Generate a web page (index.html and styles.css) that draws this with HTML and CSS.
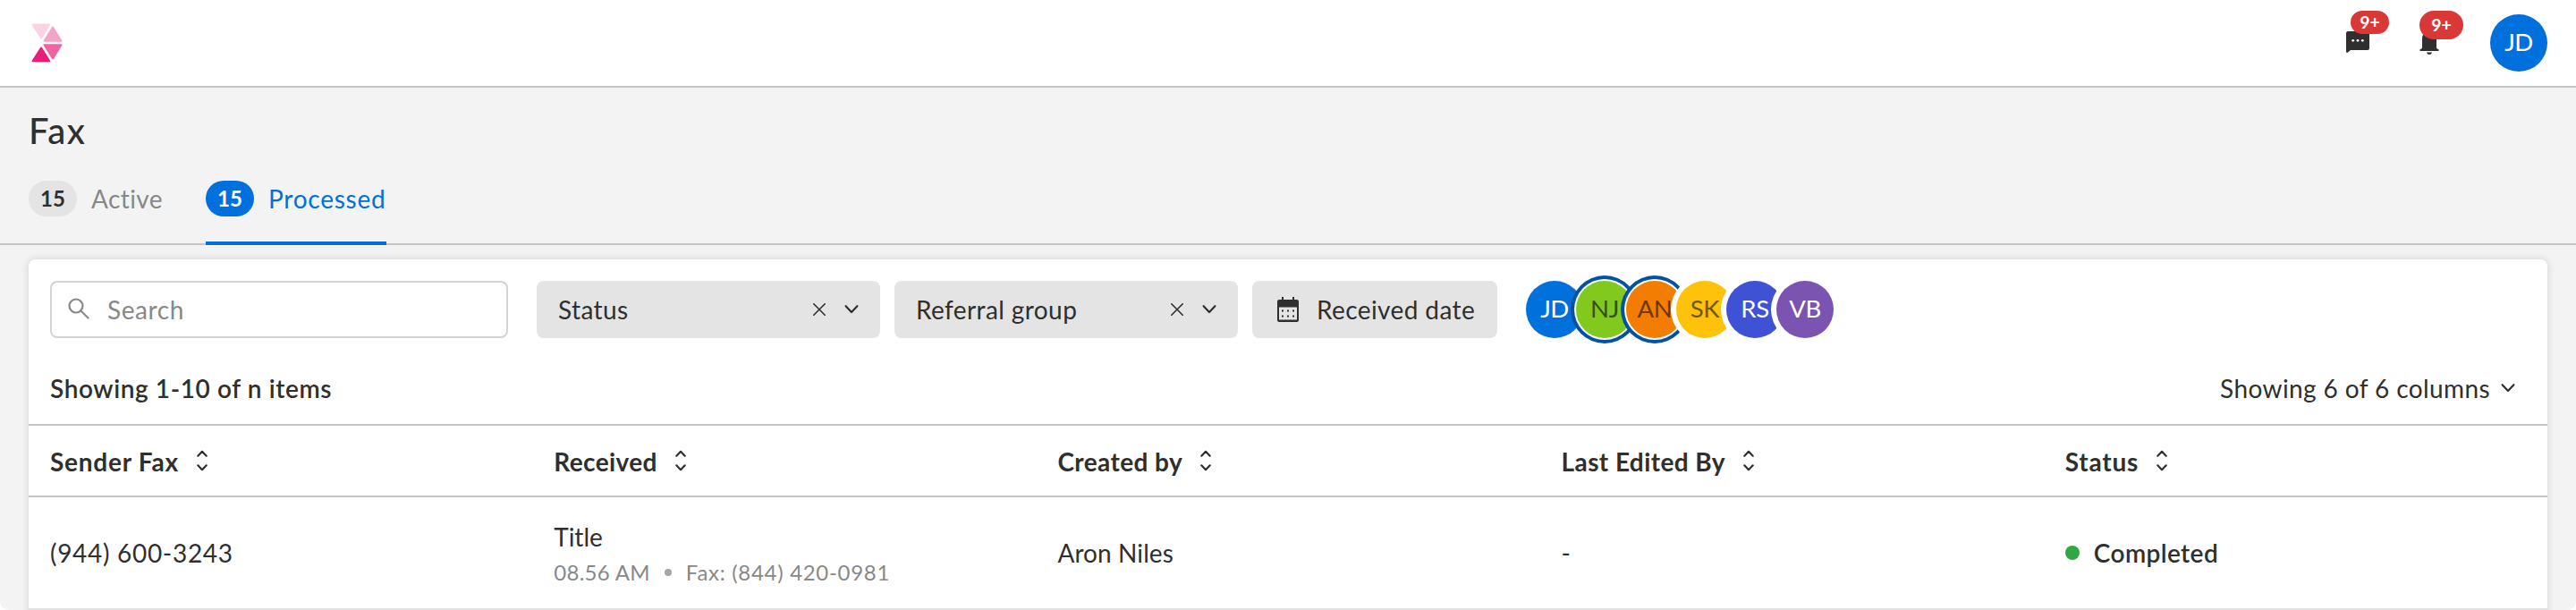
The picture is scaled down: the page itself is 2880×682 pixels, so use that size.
FILE: index.html
```
<!DOCTYPE html>
<html lang="en">
<head>
<meta charset="utf-8">
<title>Fax</title>
<link rel="stylesheet" href="styles.css">
</head>
<body>
<svg class="defs" aria-hidden="true">
  <symbol id="sort" viewBox="0 0 12 24"><path d="M1.3 6.7 6 1.8l4.7 4.9M1.3 17.3 6 22.2l4.7-4.9"/></symbol>
  <symbol id="chevron" viewBox="0 0 16 12"><path d="M1.6 2.2 8 9l6.4-6.800"/></symbol>
  <symbol id="close" viewBox="0 0 14 14"><path d="M.8.8l12.4 12.4M13.2.8.8 13.2"/></symbol>
</svg>
<div class="app">
  <header class="topbar">
    <svg class="logo" viewBox="0 0 36 44">
      <path fill="#fbd2e4" stroke="#fbd2e4" d="M1.500 1.500H20L11 16.500Z"/>
      <path fill="#f7a3c8" stroke="#f7a3c8" d="M24 4.500 33.500 19.800H14.500Z"/>
      <path fill="#f065a1" stroke="#f065a1" d="M14.500 24.200H33.500L24 39.500Z"/>
      <path fill="#e91e79" stroke="#e91e79" d="M11 27.500 20.300 42.300H1.500Z"/>
    </svg>
    <div class="actions">
      <div class="action action-chat">
        <svg viewBox="0 0 26 24"><path fill="#2f2f2f" d="M2 0h22a2 2 0 0 1 2 2v17a2 2 0 0 1-2 2H5l-3.300 2.700Q0 24.500 0 22V2a2 2 0 0 1 2-2Z"/><g fill="#fff"><circle cx="7.700" cy="10.300" r="1.400"/><circle cx="13" cy="10.300" r="1.400"/><circle cx="18.300" cy="10.300" r="1.400"/></g></svg>
        <span class="badge badge-small">9+</span>
      </div>
      <div class="action action-bell">
        <svg viewBox="0 0 22 28"><path fill="#2f2f2f" d="M11 2c5 0 8 3.500 8 8.500V20q0 2 2.500 2.300V24H.5v-1.700Q3 22 3 20v-9.500C3 5.500 6 2 11 2ZM8 25.500h6q-.5 2.500-3 2.500t-3-2.500Z"/></svg>
        <span class="badge badge-large">9+</span>
      </div>
      <div class="avatar blue">JD</div>
    </div>
  </header>

  <div class="page-head">
    <h1 class="title">Fax</h1>
    <nav class="tabs">
      <a class="tab"><span class="count">15</span><span>Active</span></a>
      <a class="tab tab-active"><span class="count">15</span><span class="loose">Processed</span></a>
    </nav>
  </div>

  <main class="card">
    <div class="filters">
      <div class="search">
        <svg viewBox="0 0 24 24"><circle cx="9" cy="9" r="7.500"/><path d="m14.500 14.500 8 8"/></svg>
        <span>Search</span>
      </div>
      <div class="select">
        <span class="select-label">Status</span>
        <svg class="close"><use href="#close"/></svg>
        <svg class="chevron"><use href="#chevron"/></svg>
      </div>
      <div class="select">
        <span class="select-label">Referral group</span>
        <svg class="close"><use href="#close"/></svg>
        <svg class="chevron"><use href="#chevron"/></svg>
      </div>
      <div class="date">
        <svg viewBox="0 0 24 28"><path fill="#2f2f2f" fill-rule="evenodd" d="M5 0h2v3h10V0h2v3h3a2 2 0 0 1 2 2v21a2 2 0 0 1-2 2H2a2 2 0 0 1-2-2V5a2 2 0 0 1 2-2h3ZM2 11.500V25.500h20V11.500Z"/><g fill="#2f2f2f"><path d="M5 14.500h2v2H5zM11 14.500h2v2h-2zM17 14.500h2v2h-2zM5 20.500h2v2H5zM11 20.500h2v2h-2zM17 20.500h2v2h-2z"/></g></svg>
        <span>Received date</span>
      </div>
      <div class="people">
        <div class="avatar blue">JD</div>
        <div class="avatar green selected">NJ</div>
        <div class="avatar orange selected">AN</div>
        <div class="avatar yellow">SK</div>
        <div class="avatar indigo">RS</div>
        <div class="avatar purple">VB</div>
      </div>
    </div>
    <div class="summary">
      <span class="summary-count">Showing 1-10 of n items</span>
      <span class="columns"><span>Showing 6 of 6 columns</span><svg class="chevron"><use href="#chevron"/></svg></span>
    </div>
    <div class="row head">
      <div class="cell"><span class="loose">Sender Fax</span><svg class="sort"><use href="#sort"/></svg></div>
      <div class="cell"><span>Received</span><svg class="sort"><use href="#sort"/></svg></div>
      <div class="cell"><span>Created by</span><svg class="sort"><use href="#sort"/></svg></div>
      <div class="cell"><span>Last Edited By</span><svg class="sort"><use href="#sort"/></svg></div>
      <div class="cell"><span class="loose">Status</span><svg class="sort"><use href="#sort"/></svg></div>
    </div>
    <div class="row">
      <div class="cell wide">(944) 600-3243</div>
      <div class="cell">
        <div>
          <div class="item-title">Title</div>
          <div class="meta"><span class="time">08.56 AM</span><i class="sep"></i><span class="number">Fax: (844) 420-0981</span></div>
        </div>
      </div>
      <div class="cell tight">Aron Niles</div>
      <div class="cell">-</div>
      <div class="cell status"><i class="dot"></i>Completed</div>
    </div>
  </main>
</div>
</body>
</html>
```
FILE: styles.css
```
* { box-sizing: border-box; }
body {
  margin: 0;
  background: #fff;
  color: #2f2f2f;
  font: 28px/40px Lato, "Open Sans", sans-serif;
  letter-spacing: .4px;
}
svg { display: block; flex: none; }
.defs { position: absolute; width: 0; height: 0; }
.app {
  height: 682px;
  overflow: hidden;
  background: #f3f3f3;
  border-radius: 0 0 10px 10px;
}
.wide { letter-spacing: .7px; }
.loose { letter-spacing: .75px; }
.tight { letter-spacing: .1px; }

.topbar {
  display: flex;
  justify-content: space-between;
  align-items: flex-start;
  height: 98px;
  padding: 16px 32px 0 35px;
  background: #fff;
  border-bottom: 2px solid #c4c4c4;
}
.logo { width: 36px; height: 44px; margin-top: 10px; stroke-width: 2; stroke-linejoin: round; }
.actions { display: flex; }
.action { position: relative; }
.action-chat { width: 26px; height: 24px; margin: 19px 56px 0 0; }
.action-bell { width: 22px; height: 28px; margin: 17px 57px 0 0; }
.badge {
  position: absolute;
  border-radius: 16px;
  background: #da3737;
  color: #fff;
  font-weight: 700;
  font-size: 19.500px;
  letter-spacing: 0;
  text-align: center;
}
.badge-small { left: 5px; top: -23px; width: 43px; height: 26px; line-height: 26px; }
.badge-large { left: 0; top: -21px; width: 49px; height: 32px; line-height: 32px; }

.avatar {
  width: 64px;
  height: 64px;
  border-radius: 50%;
  color: #fff;
  font-size: 27.500px;
  line-height: 62px;
  text-align: center;
  letter-spacing: -.4px;
}
.blue { background: #0070dd; }
.green { background: #82c91e; color: #34500c; }
.orange { background: #f27d00; color: #703600; }
.yellow { background: #ffc20a; color: #705600; }
.indigo { background: #3f51d4; }
.purple { background: #7b53b0; }

.page-head {
  height: 176px;
  padding: 24px 32px 0;
  border-bottom: 2px solid #c4c4c4;
}
.title { margin: 0; font-size: 40px; line-height: 48px; font-weight: 500; letter-spacing: 1.500px; }
.tabs { display: flex; gap: 48px; padding-top: 32px; }
.tab {
  display: flex;
  align-items: flex-start;
  gap: 16px;
  width: 150px;
  height: 72px;
  line-height: 40px;
  color: #888;
}
.tab-active { width: 202px; color: #0070dd; border-bottom: 4px solid #0070dd; border-radius: 2px 2px 0 0; }
.count {
  width: 54px;
  height: 40px;
  border-radius: 20px;
  background: #e4e4e4;
  color: #2f2f2f;
  font-size: 24px;
  font-weight: 700;
  line-height: 39px;
  text-align: center;
  letter-spacing: 0;
}
.tab-active .count { background: #0070dd; color: #fff; }

.card {
  height: 420px;
  margin: 16px 32px 0;
  border-radius: 8px 8px 0 0;
  background: #fff;
  box-shadow: 0 0 10px rgba(0, 0, 0, .14);
}
.filters { display: flex; align-items: center; height: 112px; padding: 0 24px; }
.search {
  display: flex;
  align-items: center;
  width: 512px;
  height: 64px;
  margin-right: 32px;
  padding-left: 18px;
  gap: 20px;
  border: 2px solid #d3d3d3;
  border-radius: 8px;
  color: #888;
  letter-spacing: .6px;
}
.search svg { width: 24px; height: 24px; margin-top: -2px; fill: none; stroke: #888; stroke-width: 2.200; stroke-linecap: round; }
.select, .date { display: flex; align-items: center; height: 64px; border-radius: 8px; background: #e4e4e4; margin-right: 16px; }
.select { width: 384px; padding: 0 24px; }
.select-label { flex: 1; }
.close { width: 14px; height: 14px; margin-right: 21px; fill: none; stroke: #2f2f2f; stroke-width: 1.600; stroke-linecap: round; }
.chevron { width: 16px; height: 12px; fill: none; stroke: #2f2f2f; stroke-width: 2.200; stroke-linecap: round; stroke-linejoin: round; }
.date { width: 274px; padding-left: 28px; gap: 20px; margin-right: 32px; }
.date svg { width: 24px; height: 28px; }
.people { display: flex; }
.people .avatar + .avatar { position: relative; margin-left: -8px; box-shadow: 0 0 0 6px #fff; }
.people .avatar.selected { box-shadow: 0 0 0 2px #fff, 0 0 0 6px #0052a3; }

.summary {
  display: flex;
  align-items: flex-start;
  justify-content: space-between;
  height: 74px;
  padding: 12px 36px 0 24px;
  border-bottom: 2px solid #c4c4c4;
}
.summary-count { font-weight: 600; letter-spacing: .6px; }
.columns { display: flex; align-items: center; gap: 12px; letter-spacing: .4px; }

.row { display: grid; grid-template-columns: repeat(5, 1fr); height: 126px; border-bottom: 2px solid #e2e2e2; }
.head { height: 80px; border-bottom-color: #c4c4c4; font-weight: 700; }
.head span { padding-top: 1px; }
.cell { display: flex; align-items: center; padding-left: 24px; }
.sort { width: 12px; height: 24px; margin-left: 20px; fill: none; stroke: #2f2f2f; stroke-width: 2.200; stroke-linecap: round; stroke-linejoin: round; }
.item-title { line-height: 44px; letter-spacing: 0; }
.meta { display: flex; align-items: center; color: #888; font-size: 24px; line-height: 36px; letter-spacing: .3px; }
.sep { width: 8px; height: 8px; margin: 0 16px; border-radius: 50%; background: #a6a6a6; }
.number { letter-spacing: .7px; }
.status { font-weight: 600; letter-spacing: .4px; }
.dot { width: 16px; height: 16px; margin-right: 16px; border-radius: 50%; background: #2fa843; }
```
